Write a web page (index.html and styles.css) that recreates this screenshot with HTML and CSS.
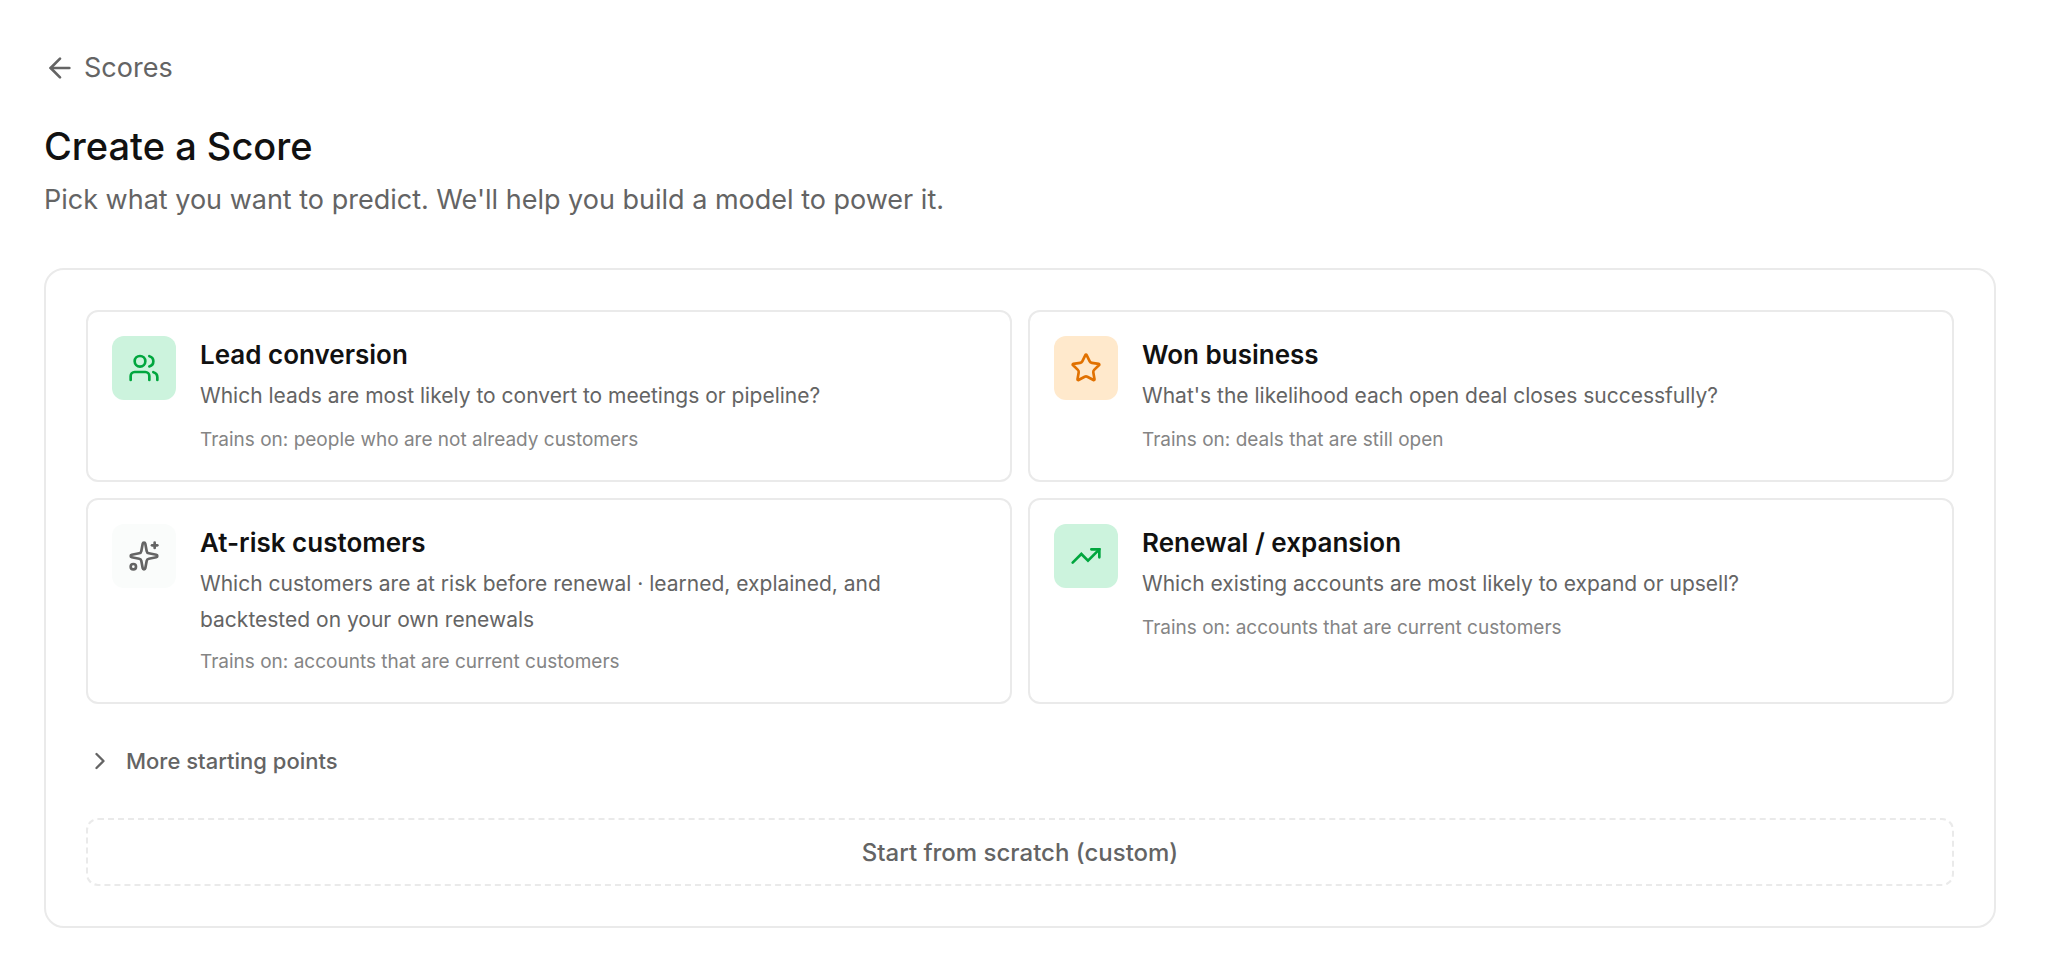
FILE: index.html
```html
<!DOCTYPE html>
<html lang="en">
<head>
    <meta charset="UTF-8">
    <meta name="viewport" content="width=device-width, initial-scale=1">
    <title>Create a Score</title>

    <link rel="stylesheet" href="styles.css">
</head>
<body>
    <main class="page">
        <a href="#" class="back">
            <svg class="icon" viewBox="0 0 24 24"><path d="M19 12H5"/><path d="m12 5-7 7 7 7"/></svg>
            Scores
        </a>

        <h1>Create a Score</h1>
        <p class="subtitle">Pick what you want to predict. We'll help you build a model to power it.</p>

        <section class="panel">
            <div class="templates">
                <button type="button" class="card">
                    <span class="badge green">
                        <svg class="icon" viewBox="0 0 24 24"><path d="M2 21v-3a3 3 0 0 1 3-3h8a3 3 0 0 1 3 3v3"/><circle cx="9" cy="7" r="4"/><path d="M22 21v-2a4 4 0 0 0-3-3.87"/><path d="M16 3.13a4 4 0 0 1 0 7.75"/></svg>
                    </span>
                    <span class="info">
                        <span class="name">Lead conversion</span>
                        <span class="desc">Which leads are most likely to convert to meetings or pipeline?</span>
                        <span class="trains">Trains on: people who are not already customers</span>
                    </span>
                </button>

                <button type="button" class="card">
                    <span class="badge orange">
                        <svg class="icon" viewBox="0 0 24 24"><path d="M11.525 2.295a.53.53 0 0 1 .95 0l2.31 4.679a2.123 2.123 0 0 0 1.595 1.16l5.166.756a.53.53 0 0 1 .294.904l-3.736 3.638a2.123 2.123 0 0 0-.611 1.878l.882 5.14a.53.53 0 0 1-.771.56l-4.618-2.428a2.122 2.122 0 0 0-1.973 0L6.396 21.01a.53.53 0 0 1-.77-.56l.881-5.139a2.122 2.122 0 0 0-.611-1.879L2.16 9.795a.53.53 0 0 1 .294-.906l5.165-.755a2.122 2.122 0 0 0 1.597-1.16z"/></svg>
                    </span>
                    <span class="info">
                        <span class="name">Won business</span>
                        <span class="desc">What's the likelihood each open deal closes successfully?</span>
                        <span class="trains">Trains on: deals that are still open</span>
                    </span>
                </button>

                <button type="button" class="card">
                    <span class="badge gray">
                        <svg class="icon" viewBox="0 0 24 24"><path d="M11.02 2.81a1 1 0 0 1 1.96 0l1.05 5.56a2 2 0 0 0 1.6 1.6l5.56 1.05a1 1 0 0 1 0 1.96l-5.56 1.05a2 2 0 0 0-1.6 1.6l-1.05 5.56a1 1 0 0 1-1.96 0l-1.05-5.56a2 2 0 0 0-1.6-1.6l-5.56-1.05a1 1 0 0 1 0-1.96l5.56-1.05a2 2 0 0 0 1.6-1.6z"/><path d="M20 2v4"/><path d="M22 4h-4"/><circle cx="4" cy="20" r="2"/></svg>
                    </span>
                    <span class="info">
                        <span class="name">At-risk customers</span>
                        <span class="desc">Which customers are at risk before renewal · learned, explained, and backtested on your own renewals</span>
                        <span class="trains">Trains on: accounts that are current customers</span>
                    </span>
                </button>

                <button type="button" class="card">
                    <span class="badge green">
                        <svg class="icon sharp" viewBox="0 0 24 24"><path d="M16 7h6v6"/><path d="m22 7-8.5 8.5-5-5L2 17"/></svg>
                    </span>
                    <span class="info">
                        <span class="name">Renewal / expansion</span>
                        <span class="desc">Which existing accounts are most likely to expand or upsell?</span>
                        <span class="trains">Trains on: accounts that are current customers</span>
                    </span>
                </button>
            </div>

            <button type="button" class="more">
                <svg class="icon" viewBox="0 0 24 24"><path d="m9 18 6-6-6-6"/></svg>
                More starting points
            </button>

            <button type="button" class="scratch">Start from scratch (custom)</button>
        </section>
    </main>
</body>
</html>
```
FILE: styles.css
```css
* {
    box-sizing: border-box;
}
body {
    margin: 0;
    background: #fff;
    color: #111;
    font-family: Inter, "Liberation Sans", sans-serif;
}
button {
    background: none;
    color: inherit;
    font: inherit;
    cursor: pointer;
}
.icon {
    width: 32px;
    height: 32px;
    flex-shrink: 0;
    fill: none;
    stroke: currentColor;
    stroke-width: 2;
    stroke-linecap: round;
    stroke-linejoin: round;
}
.sharp {
    stroke-linejoin: miter;
}
.page {
    padding: 48px 64px 40px 44px;
}
.back {
    display: inline-flex;
    align-items: center;
    gap: 8px;
    color: #646464;
    font-size: 27px;
    line-height: 40px;
    text-decoration: none;
}
h1 {
    margin: 32px 0 0;
    font-size: 38px;
    font-weight: 500;
    line-height: 52px;
}
.subtitle {
    margin: 8px 0 48px;
    color: #646464;
    font-size: 27px;
    line-height: 40px;
}
.panel {
    padding: 40px;
    border: 2px solid #eaeaea;
    border-radius: 20px;
}
.templates {
    display: grid;
    grid-template-columns: 1fr 1fr;
    gap: 16px;
}
.card {
    display: flex;
    align-items: flex-start;
    gap: 24px;
    padding: 24px;
    border: 2px solid #eaeaea;
    border-radius: 12px;
    text-align: left;
}
.badge {
    display: flex;
    flex-shrink: 0;
    align-items: center;
    justify-content: center;
    width: 64px;
    height: 64px;
    border-radius: 12px;
}
.green {
    background: #ccf3dd;
    color: #00a63e;
}
.orange {
    background: #ffe9cc;
    color: #e17100;
}
.gray {
    background: #fafcfb;
    color: #646464;
}
.info {
    display: flex;
    flex-direction: column;
    min-width: 0;
}
.name {
    font-size: 26px;
    font-weight: 600;
    line-height: 38px;
}
.desc {
    min-height: 38px;
    margin-top: 4px;
    color: #646464;
    font-size: 21px;
    line-height: 36px;
}
.trains {
    margin-top: 8px;
    color: #858585;
    font-size: 19px;
    line-height: 32px;
}
.more {
    display: flex;
    align-items: center;
    gap: 12px;
    margin-top: 32px;
    padding: 8px 0;
    border: 0;
    color: #646464;
    font-size: 22px;
    font-weight: 500;
    line-height: 34px;
}
.more .icon {
    width: 28px;
    height: 28px;
}
.scratch {
    display: block;
    width: 100%;
    height: 68px;
    margin-top: 32px;
    border: 2px dashed #eaeaea;
    border-radius: 12px;
    color: #646464;
    font-size: 24px;
    font-weight: 500;
}
```
